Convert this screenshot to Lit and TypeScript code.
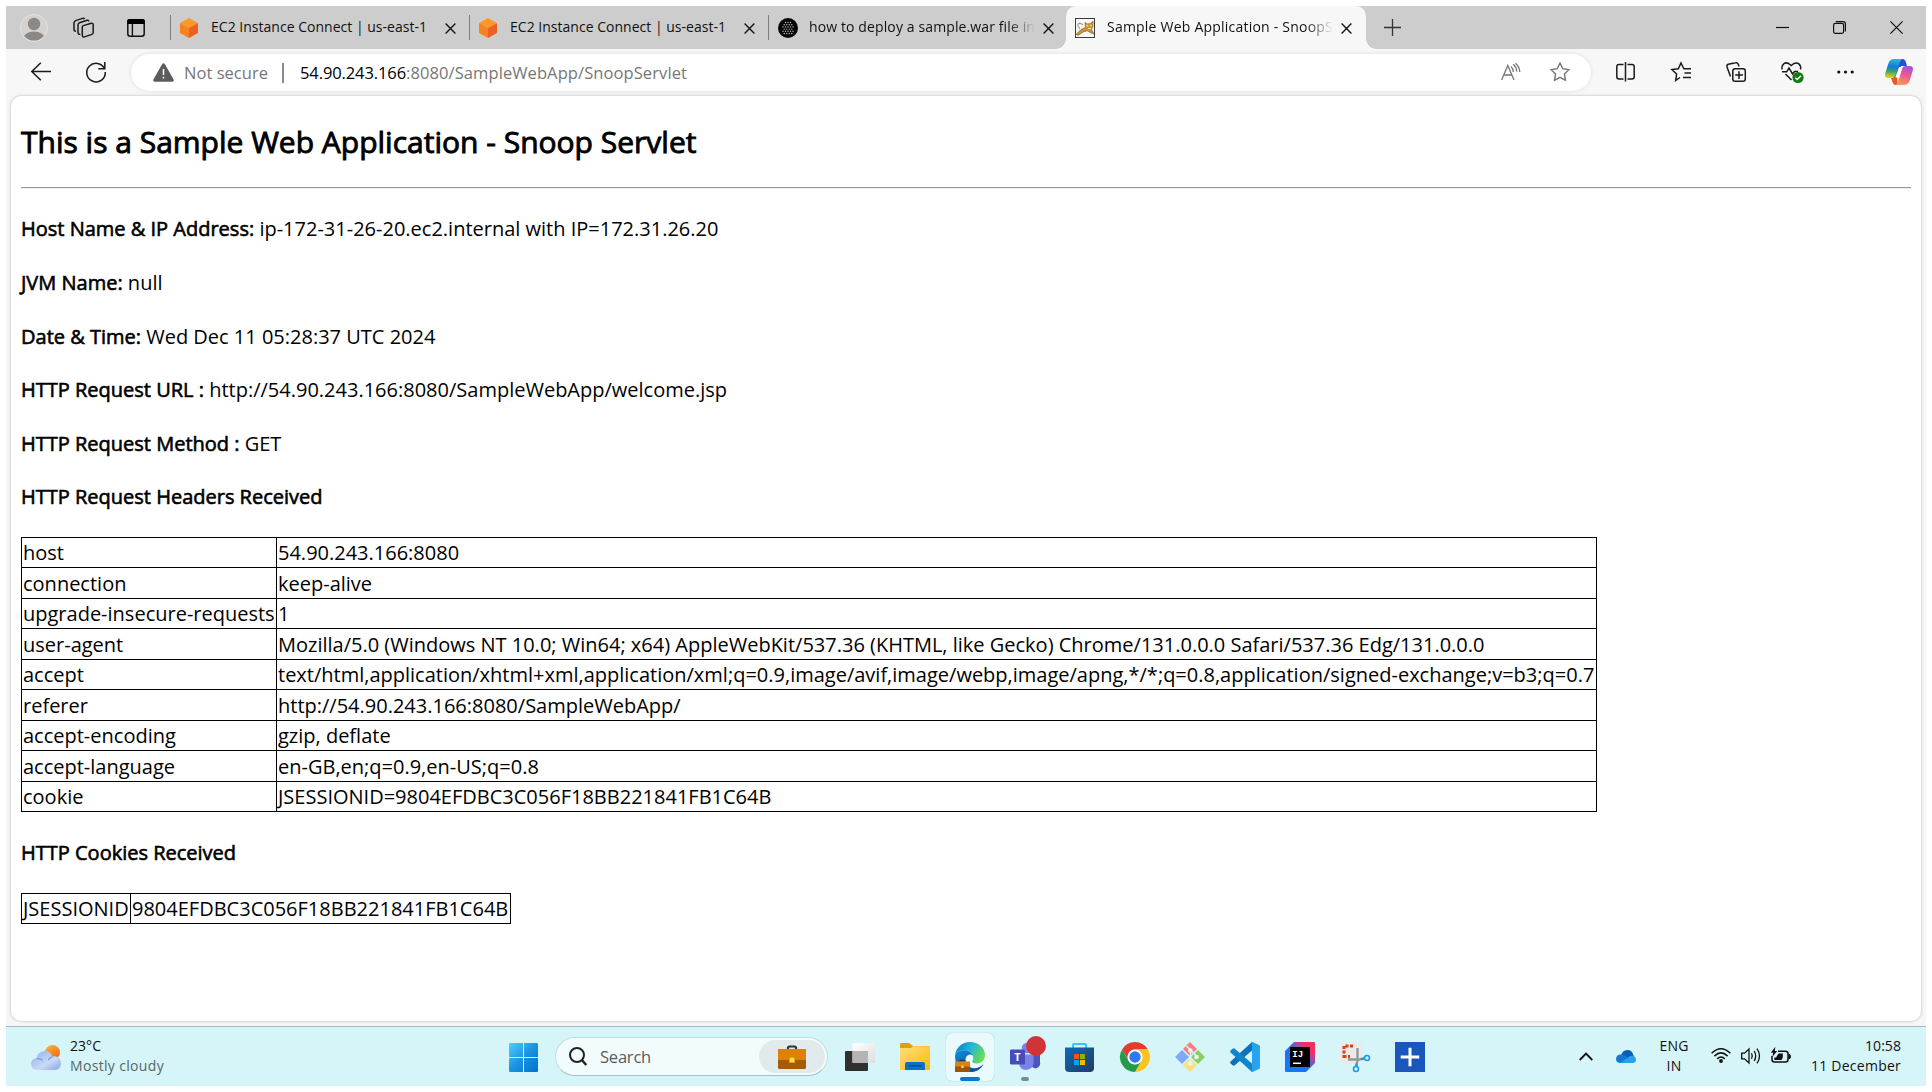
import { LitElement, html, svg, css, nothing } from "lit";
import { customElement, property } from "lit/decorators.js";

/** One line of text spread over an exact width by adjusting its tracking. */
@customElement("fit-text")
class FitText extends LitElement {
  @property({ type: Number }) width = 0;
  @property() text = "";
  static styles = css`
    :host { display: block; white-space: pre; }
    span { display: inline-block; }
  `;
  render() {
    return html`<span>${this.text}</span>`;
  }
  updated() {
    const s = this.renderRoot.querySelector("span") as HTMLElement;
    s.style.letterSpacing = "0px";
    const natural = s.getBoundingClientRect().width;
    s.style.letterSpacing = `${(this.width - natural) / this.text.length}px`;
  }
}

const fit = (text: string, width: number) => html`<fit-text .text=${text} .width=${width}></fit-text>`;

const icon = (cls: string, w: number, h: number, body: unknown) =>
  html`<svg class="ic ${cls}" width=${w} height=${h} viewBox="0 0 ${w} ${h}" fill="none">${body}</svg>`;

const closeX = html`<svg class="ic close" width="11" height="11" viewBox="0 0 11 11" fill="none">
  <path d="M.6.6l9.8 9.8M10.400.6L.6 10.400" stroke="#151515" stroke-width="1.400" /></svg>`;

const cube = icon("fav", 18, 20, svg`
  <path d="M9 0L18 5L9 10L0 5Z" fill="#fd9827"/>
  <path d="M0 5L9 10V20L0 15Z" fill="#f68220"/>
  <path d="M18 5L9 10V20L18 15Z" fill="#ec6122"/>`);

const dotsIcon = icon("fav", 20, 20, svg`
  <circle cx="10" cy="10" r="10" fill="#060606"/>
  ${[
    [4.5, 3], [6.7, 4], [8.9, 5], [11.1, 4], [13.3, 5], [15.5, 4],
  ].map(([y, n]) => Array.from({ length: n }, (_, i) =>
    svg`<circle cx=${10 + (i - (n - 1) / 2) * 2.5} cy=${y} r=".7" fill="#c4c4c4"/>`))}`);

const tomcat = icon("fav", 20, 20, svg`
  <rect x=".5" y=".5" width="19" height="19" fill="#f7f7f5" stroke="#3c3c3c"/>
  <path d="M8 7C5.500 4.500 2.500 5 2.800 7.500C3 9.500 5 9 4.500 11" stroke="#999" stroke-width="1.100"/>
  <path d="M1 16.500L6 11.500L10.500 9.500L10 4.500L12.500 6L15.500 5.500L18.200 3.200L17.800 8.500L16.500 11.500L19 16L15.800 14.800L12.500 12.800L8 14L3.500 17.200Z" fill="#cf9331" stroke="#6d5328" stroke-width=".6"/>
  <path d="M11.500 7.600h1.600M15 7.400h1.600" stroke="#f6e36a" stroke-width="1.500"/>
  <path d="M13 10.500h3" stroke="#f5e6c3" stroke-width="1.200"/>`);

const edgeIcon = svg`
  <defs>
    <linearGradient id="eg1" x1="0" y1=".2" x2="1" y2=".6"><stop offset="0" stop-color="#0c7bc9"/><stop offset=".45" stop-color="#22b4d9"/><stop offset="1" stop-color="#6be04c"/></linearGradient>
    <linearGradient id="eg2" x1="0" y1="0" x2=".7" y2="1"><stop offset="0" stop-color="#0f8bdc"/><stop offset="1" stop-color="#0b4f9c"/></linearGradient>
  </defs>
  <path d="M0 14C.5 6 7 0 15 0C23.500 0 30 6 30 13C30 18 26 21.500 21.500 21.500C18.500 21.500 16.800 20.300 17.200 19.200C18.500 17.500 18.300 16 18 14.800C17 11 12.500 8 8 8.300C4 8.500 1 10.500 0 14Z" fill="url(#eg1)"/>
  <path d="M0 14C1 10.500 4.300 8.300 8 8.300C12 8.200 16 10 17.600 13C14.500 11.200 10.500 13.500 10.500 18C10.500 23 15 27 20 26.500C23 26.200 25.500 25 28 22.500C25.500 27.500 20.500 30 15 30C6.500 30-.3 23 0 14Z" fill="url(#eg2)"/>
  <path d="M11 19C12 24 16 27 20.500 26.500C24 26.200 26.500 24.500 28.500 22C26 27.500 20.500 30 15 30L13 27Z" fill="#11509a"/>
  <path d="M5 19.500v-1.200h5v1.200" stroke="#3a2a18"/>
  <path d="M0 19.500h15V25H0z" fill="#d98512"/><path d="M0 24.500h15V30H0z" fill="#9b5608"/>
  <rect x="6.200" y="23.500" width="2.500" height="2.500" fill="#f6d34a"/>`;

const teams = svg`
  <circle cx="26" cy="7.500" r="4" fill="#5059c9"/>
  <path d="M21 13h9v7a4.500 4.500 0 0 1-9 3z" fill="#4c55bd"/>
  <circle cx="17" cy="6" r="5.300" fill="#7b83eb"/>
  <path d="M9.500 12.500h14V21a7.500 7.500 0 0 1-14 3z" fill="#7b83eb"/>
  <rect y="7.500" width="15" height="15" rx="1.200" fill="#454eb8"/>
  <text x="7.500" y="19" font-family="Open Sans, sans-serif" font-size="11" font-weight="700" text-anchor="middle" fill="#fff">T</text>`;

const store = svg`
  <defs><linearGradient id="st" x1="0" y1="0" x2="1" y2="1"><stop offset="0" stop-color="#0c6bb8"/><stop offset="1" stop-color="#233a63"/></linearGradient></defs>
  <path d="M8 6V2.800Q8 2 8.800 2H20.200Q21 2 21 2.800V6" stroke="#35c5f2" stroke-width="2"/>
  <path d="M0 5.500h29V26a4 4 0 0 1-4 4H4a4 4 0 0 1-4-4z" fill="url(#st)"/>
  <path d="M9 12h5v5H9z" fill="#f25022"/><path d="M15 12h5v5h-5z" fill="#7fba00"/>
  <path d="M9 18h5v5H9z" fill="#00a4ef"/><path d="M15 18h5v5h-5z" fill="#ffb900"/>`;

const chrome = svg`
  <circle cx="15" cy="15" r="15" fill="#fff"/>
  <path d="M2 7.500A15 15 0 0 1 28 7.500H15A7.500 7.500 0 0 0 8.500 18.700Z" fill="#e33b2e"/>
  <path d="M28 7.500A15 15 0 0 1 15 30L21.500 18.700A7.500 7.500 0 0 0 15 7.500Z" fill="#fcc31e"/>
  <path d="M2 7.500A15 15 0 0 0 15 30L21.500 18.700A7.500 7.500 0 0 1 8.500 18.700Z" fill="#249a4b"/>
  <circle cx="15" cy="15" r="7.300" fill="#fff"/><circle cx="15" cy="15" r="5.700" fill="#2f79ee"/>`;

const git = svg`
  <path d="M15 0L22 7L15 14L8 7Z" fill="#fb7c7f"/><path d="M7 8L14 15L7 22L0 15Z" fill="#7da9fb"/>
  <path d="M23 8L30 15L23 22L16 15Z" fill="#87d05d"/><path d="M15 16L22 23L15 30L8 23Z" fill="#fbe07c"/>
  <path d="M11.500 4L15.500 8V22M15.500 8L22 14.500" stroke="#d9f3f5" stroke-width="1.600"/>
  <circle cx="15.300" cy="8.500" r="2.300" fill="#e4f5f6"/><circle cx="15.300" cy="21.500" r="2.300" fill="#e4f5f6"/><circle cx="21.500" cy="15" r="2.300" fill="#e4f5f6"/>`;

const vscode = svg`
  <path d="M22 0L22 8.500L4.500 23.500Q3.700 24 3 23.500L.6 21.400Q-.2 20.500.6 19.600Z" fill="#0d72b8"/>
  <path d="M22 30V21.500L4.500 6.500Q3.700 6 3 6.500L.6 8.600Q-.2 9.500.6 10.400Z" fill="#0f86cc"/>
  <path d="M21 .2Q22 -.3 23 .2L29 3Q30 3.500 30 4.600V25.400Q30 26.500 29 27L23 29.800Q22 30.300 21 29.500Q22 29 22 27.500V2.500Q22 1 21 .2Z" fill="#28a4ee"/>`;

const intellij = svg`
  <defs>
    <linearGradient id="ij" x1="0" y1="1" x2="1" y2="0"><stop offset="0" stop-color="#0a7dff"/><stop offset=".5" stop-color="#2170f0"/><stop offset=".66" stop-color="#a04ca8"/><stop offset=".8" stop-color="#fb2b5e"/><stop offset="1" stop-color="#f52e68"/></linearGradient>
  </defs>
  <path d="M9 0H29a1 1 0 0 1 1 1V21L21 30H1a1 1 0 0 1-1-1V9Z" fill="url(#ij)"/>
  <path d="M5 5H25V25H5Z" fill="#000"/>
  <text x="7.300" y="14.700" font-family="Liberation Mono, monospace" font-size="9" font-weight="700" fill="#fff">IJ</text>
  <path d="M8 21.300h8" stroke="#fff" stroke-width="1.500"/>`;

const snip = svg`
  <rect width="22" height="22" rx="3.500" fill="#ece9e9"/>
  <path d="M4 16V4H14.500" stroke="#d4420f" stroke-width="3" stroke-dasharray="3 1.500"/>
  <path d="M4 14.500h6" stroke="#d4420f" stroke-width="3" stroke-dasharray="2.500 1.500"/>
  <path d="M17.500 6V19L15.800 24M8 17.500H19L24 16.200" stroke="#8f979c" stroke-width="2.300"/>
  <circle cx="27" cy="16" r="2.500" stroke="#1c9ae0" stroke-width="1.600"/><circle cx="16" cy="27" r="2.500" stroke="#1c9ae0" stroke-width="1.600"/>
  <path d="M21 17.200l3.500-.7M17 21.500l-.7 3" stroke="#1c9ae0" stroke-width="2"/>`;

const plusApp = svg`
  <rect width="30" height="30" fill="#1a57bd"/><path d="M15 5.700V24.300M5.700 15H24.300" stroke="#fff" stroke-width="3"/>`;

const APPS: { art: unknown; mark?: string; dot?: boolean }[] = [
  { art: edgeIcon, mark: "active" },
  { art: teams, mark: "open", dot: true },
  { art: store }, { art: chrome }, { art: git }, { art: vscode },
  { art: intellij }, { art: snip }, { art: plusApp },
];

const TABS = [
  { icon: cube, title: "EC2 Instance Connect | us-east-1", w: 216 },
  { icon: cube, title: "EC2 Instance Connect | us-east-1", w: 216 },
  { icon: dotsIcon, title: "how to deploy a sample.war file in", w: 226 },
  { icon: tomcat, title: "Sample Web Application - SnoopS", w: 226, active: true },
];

const FACTS = [
  ["Host Name & IP Address:", "ip-172-31-26-20.ec2.internal with IP=172.31.26.20"],
  ["JVM Name:", "null"],
  ["Date & Time:", "Wed Dec 11 05:28:37 UTC 2024"],
  ["HTTP Request URL :", "http://54.90.243.166:8080/SampleWebApp/welcome.jsp"],
  ["HTTP Request Method :", "GET"],
  ["HTTP Request Headers Received", ""],
];

const HEADERS = [
  ["host", "54.90.243.166:8080"],
  ["connection", "keep-alive"],
  ["upgrade-insecure-requests", "1"],
  ["user-agent", "Mozilla/5.0 (Windows NT 10.0; Win64; x64) AppleWebKit/537.36 (KHTML, like Gecko) Chrome/131.0.0.0 Safari/537.36 Edg/131.0.0.0"],
  ["accept", "text/html,application/xhtml+xml,application/xml;q=0.9,image/avif,image/webp,image/apng,*/*;q=0.8,application/signed-exchange;v=b3;q=0.7"],
  ["referer", "http://54.90.243.166:8080/SampleWebApp/"],
  ["accept-encoding", "gzip, deflate"],
  ["accept-language", "en-GB,en;q=0.9,en-US;q=0.8"],
  ["cookie", "JSESSIONID=9804EFDBC3C056F18BB221841FB1C64B"],
];

@customElement("tab-strip")
class TabStrip extends LitElement {
  static styles = css`
    :host { display: flex; height: 43px; background: #cdcdcd; align-items: center; font-size: 14px; color: #111; }
    .ic { display: block; flex: none; overflow: visible; }
    .avatar { margin-left: 14px; }
    .spaces { margin-left: 25px; }
    .vtabs { margin-left: 33px; }
    .tabs { display: flex; height: 43px; margin-left: 25px; }
    .tab { display: flex; align-items: center; width: 299px; box-sizing: border-box; height: 43px; }
    .tab:nth-child(4) { width: 300px; }
    .bar { width: 1px; height: 25px; background: #7d7d7d; flex: none; margin-right: 9px; }
    .pic { width: 20px; flex: none; display: flex; align-items: center; margin-top: 1px; }
    .title { width: 226px; margin-left: 11px; flex: none; overflow: hidden; line-height: 22px; margin-top: -1px; }
    .fade { -webkit-mask-image: linear-gradient(90deg, #000 88%, transparent 100%); }
    .close { margin: 1px 0 0 8px; }
    .active { background: #f7f7f7; border-radius: 10px 10px 0 0; position: relative; padding-left: 9px; margin-left: -1px; }
    .active .title { margin-left: 12px; }
    .active::before, .active::after { content: ""; position: absolute; bottom: 0; width: 10px; height: 10px; }
    .active::before { left: -10px; background: radial-gradient(circle at 0 0, transparent 9.500px, #f7f7f7 10px); }
    .active::after { right: -10px; background: radial-gradient(circle at 100% 0, transparent 9.500px, #f7f7f7 10px); }
    .plus { margin-left: 18px; }
    .win { display: flex; margin-left: auto; margin-right: 23px; gap: 44px; align-items: center; }
  `;
  render() {
    return html`
      ${icon("avatar", 28, 28, svg`
        <defs><clipPath id="av"><circle cx="14" cy="14" r="12.600"/></clipPath></defs>
        <circle cx="14" cy="14" r="13.500" fill="#d4d2cf" stroke="#e4e3df"/>
        <g clip-path="url(#av)"><circle cx="14" cy="10" r="6.200" fill="#8b8886"/><ellipse cx="14" cy="24" rx="10.500" ry="6.500" fill="#8b8886"/></g>`)}
      ${icon("spaces", 21, 20, svg`<g stroke="#1a1a1a" stroke-width="1.500">
        <path d="M10.400 7.600L18.300 5.300Q20.200 5 20.200 6.800V14.600Q20.200 16 18.900 16.400L11.400 18.900Q9.300 19.400 9.300 17.300V9.200Q9.300 8 10.400 7.600Z"/>
        <path d="M7.300 16.200Q5 16.500 5 14.300V7Q5 5.300 6.500 4.700L14 2.300Q15.700 2 15.900 3.500"/>
        <path d="M3 13.300Q1 13.300 1 11.300V5Q1 3.200 2.600 2.600L9.500.4Q11 0 11.500 1.100"/></g>`)}
      ${icon("vtabs", 18, 18, svg`<rect x=".8" y=".8" width="16.400" height="16.400" rx="2.500" stroke="#111" stroke-width="1.500"/>
        <path d="M0 5V2.500Q0 0 2.500 0h13Q18 0 18 2.500V5Z" fill="#000"/><path d="M5.400 5V17" stroke="#111" stroke-width="1.400"/>`)}
      <div class="tabs">
        ${TABS.map((t) => html`<div class="tab ${t.active ? "active" : ""}">
          ${t.active ? nothing : html`<span class="bar"></span>`}
          <span class="pic">${t.icon}</span>
          <div class="title ${t.w > 220 ? "fade" : ""}">${fit(t.title, t.w)}</div>
          ${closeX}
        </div>`)}
      </div>
      ${icon("plus", 17, 17, svg`<path d="M8.500 0V17M0 8.500H17" stroke="#333" stroke-width="1.300"/>`)}
      <div class="win">
        ${icon("", 13, 13, svg`<path d="M0 6.500H13" stroke="#111" stroke-width="1.200"/>`)}
        ${icon("", 13, 13, svg`<rect x=".6" y="2.400" width="10" height="10" rx="1.800" stroke="#111" stroke-width="1.200"/><path d="M2.800.6H10Q12.400.6 12.400 3V10.500" stroke="#111" stroke-width="1.200"/>`)}
        ${icon("", 13, 13, svg`<path d="M.4.4L12.600 12.600M12.600.4L.4 12.600" stroke="#111" stroke-width="1.200"/>`)}
      </div>`;
  }
}

const STAR = "M10 .9L12.700 6.700L19.100 7.600L14.400 12L15.600 18.400L10 15.300L4.400 18.400L5.600 12L.9 7.600L7.300 6.700Z";

@customElement("tool-bar")
class ToolBar extends LitElement {
  static styles = css`
    :host { display: flex; height: 47px; background: #f7f7f7; align-items: center; font-size: 16.500px; color: #767676; }
    .ic { display: block; flex: none; overflow: visible; margin-bottom: 1px; }
    .back { margin-left: 25px; margin-right: 35px; }
    .reload { margin-right: 25px; }
    .field { display: flex; align-items: center; width: 1460px; height: 37px; border-radius: 19px; background: #fff; box-shadow: 0 0 4px #0000001c; flex: none; box-sizing: border-box; padding-left: 22px; }
    .ns { width: 83px; margin-left: 10px; }
    .bar { width: 2px; height: 20px; background: #8a8a8a; margin: 0 16px 0 15px; }
    .host { color: #000; }
    .read { margin-left: auto; margin-right: 30px; }
    .star { margin-right: 21px; }
    .actions { display: flex; align-items: center; margin-left: 25px; gap: 35px; }
    .split { margin-right: 1px; }
    .heart { margin-right: -2px; }
    .more { margin-right: -4px; }
  `;
  render() {
    return html`
      ${icon("back", 20, 20, svg`<path d="M20 9.500H.8M9.800.8L.8 9.500L9.800 18.200" stroke="#1b1b1b" stroke-width="1.500"/>`)}
      ${icon("reload", 20, 20, svg`<path d="M18.600 7A9.300 9.300 0 1 0 19.300 10" stroke="#1b1b1b" stroke-width="1.500"/><path d="M18.800 0V6.700H12.300" stroke="#1b1b1b" stroke-width="1.500"/>`)}
      <div class="field">
        ${icon("", 21, 19, svg`<path d="M10.500 1.800L19.300 17.300H1.700Z" fill="#5c5c5c" stroke="#5c5c5c" stroke-width="3" stroke-linejoin="round"/><path d="M10.500 6V12M10.500 13.700V15.500" stroke="#fff" stroke-width="1.500"/>`)}
        <span class="ns">${fit("Not secure", 84)}</span>
        <span class="bar"></span>
        <span class="host">${fit("54.90.243.166", 106)}</span>
        <span>${fit(":8080/SampleWebApp/SnoopServlet", 281)}</span>
        ${icon("read", 19, 18, svg`<g stroke="#777" stroke-width="1.300"><path d="M.6 17L6.800 2.500L13 17M3 12H10.700"/><path d="M10 3.500Q12.300 5.500 12.300 9M12.300 1.300Q15.500 4 15.800 8.500M14.500 .2Q18.500 3.500 18.800 9"/></g>`)}
        ${icon("star", 20, 20, svg`<path d=${STAR} stroke="#777" stroke-width="1.400" stroke-linejoin="round"/>`)}
      </div>
      <div class="actions">
        ${icon("split", 19, 20, svg`<path d="M7.500 2.500H3Q.8 2.500.8 4.700V14.800Q.8 17 3 17H7.500M11.500 2.500H16Q18.200 2.500 18.200 4.700V14.800Q18.200 17 16 17H11.500M9.500 0V19.500" stroke="#1b1b1b" stroke-width="1.500"/>`)}
        ${icon("", 20, 20, svg`<path d="M13 7L10 .9L7.300 6.700L.9 7.600L5.600 12L4.700 18.400L9 15.500M12.500 6.700H20M13.500 11H20M12 15.500H20" stroke="#1b1b1b" stroke-width="1.500"/>`)}
        ${icon("", 20, 20, svg`<g stroke="#1b1b1b" stroke-width="1.500"><rect x="6.800" y="6.800" width="12.500" height="12.500" rx="2.300"/><path d="M13 9.300V17M9.200 13H17M4.500 14.500L1 5Q.4 3 2.300 2.300L9.500.8Q11.500.3 12.300 2.300L13 4.500"/></g>`)}
        ${icon("heart", 23, 20, svg`<g stroke="#1b1b1b" stroke-width="1.500"><path d="M1.200 7.500C0 3 4-.5 7.500 1.500L10.200 3.500L13 1.500C17 -.3 20.500 3 19.500 7.500M1 9.800H5.700L8 6L11.500 12L13.500 9.500H17M4.500 12L10.500 18"/></g>
          <circle cx="17" cy="15.500" r="5.600" fill="#107c10"/><path d="M14.300 15.700L16.200 17.500L20 13.700" stroke="#fff" stroke-width="1.400"/>`)}
        ${icon("more", 17, 4, svg`<circle cx="1.800" cy="2" r="1.600" fill="#111"/><circle cx="8.500" cy="2" r="1.600" fill="#111"/><circle cx="15.200" cy="2" r="1.600" fill="#111"/>`)}
        ${icon("", 28, 26, svg`<defs>
            <linearGradient id="c1" x1=".4" y1="0" x2=".3" y2="1"><stop offset="0" stop-color="#2cb3ee"/><stop offset=".4" stop-color="#1479d4"/><stop offset=".65" stop-color="#38a46c"/><stop offset="1" stop-color="#f1d60e"/></linearGradient>
            <linearGradient id="c2" x1=".7" y1="0" x2=".4" y2="1"><stop offset="0" stop-color="#a54fe4"/><stop offset=".5" stop-color="#ee5a8c"/><stop offset="1" stop-color="#fb9a55"/></linearGradient></defs>
          <path d="M14 0H17.500Q20 0 20.800 3L22 7H16L12 19H8Z" fill="#2350d4"/>
          <path d="M9 0H17.500Q15.800.3 15 3L10.500 16.500Q9.800 19 7 19H3Q-.8 19 .2 14.500L3.500 4Q5 0 9 0Z" fill="url(#c1)"/>
          <path d="M6 19H10Q11 17 12 13L12.500 26H10Q8.500 26 7.500 23Z" fill="#ec5432"/>
          <path d="M19 26H10.500Q12.300 25.700 13 23L17 9.500Q17.800 7 20.500 7H24.800Q28.800 7 27.800 11.500L24.500 22Q23 26 19 26Z" fill="url(#c2)"/>
          <path d="M14 8H17.300L14.300 18.500H10.300Z" fill="#fff"/>`)}
      </div>`;
  }
}

@customElement("snoop-page")
class SnoopPage extends LitElement {
  static styles = css`
    :host { display: block; box-sizing: border-box; height: 925px; margin: 0 5px; padding: 25px 10px 0; background: #fff; border-radius: 10px; box-shadow: 0 0 3px #00000045; font-size: 20px; line-height: 27px; color: #000; overflow: hidden; }
    .h2 { margin: 0; font-size: 30px; line-height: 41px; font-weight: 400; -webkit-text-stroke: 0.900px #000; }
    .rule { height: 1px; background: #9a9a9a; border-bottom: 1px solid #ececec; margin: 25px 0 26.400px; }
    .fact { height: 27px; margin-bottom: 26.600px; white-space: pre; }
    .label { -webkit-text-stroke: 0.600px #000; }
    .grid { display: grid; border: 1px solid #000; box-sizing: border-box; white-space: pre; }
    .cell { padding: 1px 0 0 1px; border-bottom: 1px solid #000; box-sizing: border-box; }
    .cell:nth-child(4n), .cell:nth-child(4n + 3) { padding-top: 2px; }
    .cell:nth-child(odd) { border-right: 1px solid #000; }
    .cell:nth-last-child(-n + 2) { border-bottom: 0; }
    .headers { width: 1576px; height: 275px; grid-template-columns: 255px 1fr; grid-template-rows: repeat(4, 30px 31px) 29px; }
    .cookies { width: 490px; height: 31px; grid-template-columns: 109px 1fr; grid-template-rows: 29px; }
    .second { margin: 27px 0; }
  `;
  private grid(cls: string, rows: string[][]) {
    return html`<div class="grid ${cls}">
      ${rows.map(([k, v]) => html`<div class="cell">${k}</div><div class="cell">${v}</div>`)}
    </div>`;
  }
  render() {
    return html`
      <h2 class="h2">This is a Sample Web Application - Snoop Servlet</h2>
      <div class="rule"></div>
      ${FACTS.map(([k, v]) => html`<div class="fact"><span class="label">${k}</span> ${v}</div>`)}
      ${this.grid("headers", HEADERS)}
      <div class="fact second"><span class="label">HTTP Cookies Received</span></div>
      ${this.grid("cookies", [["JSESSIONID", "9804EFDBC3C056F18BB221841FB1C64B"]])}`;
  }
}

@customElement("task-bar")
class TaskBar extends LitElement {
  static styles = css`
    :host { display: flex; box-sizing: border-box; height: 60px; border-top: 1px solid #9fbcbf; background: #d6f5f9; align-items: center; font-size: 14px; color: #111; line-height: 20px; }
    .ic { display: block; flex: none; overflow: visible; }
    .weather { margin-left: 25px; margin-right: 9px; margin-top: 1px; }
    .two { display: flex; flex-direction: column; margin-bottom: 2px; }
    .wt { width: 94px; }
    .dim { color: #56666a; }
    .start { margin-left: 345px; margin-top: 1px; }
    .search { display: flex; align-items: center; box-sizing: border-box; width: 273px; height: 39px; margin-left: 17px; border: 1px solid #c3dcdf; border-bottom-color: #a5c1c4; border-radius: 20px; background: #f3fcfd; padding-left: 13px; font-size: 16.500px; color: #565c5e; flex: none; }
    .word { margin-left: 13px; }
    .case { display: flex; align-items: center; justify-content: center; width: 66px; height: 33px; border-radius: 17px; background: #e2ebeb; margin-left: auto; margin-right: 2px; }
    .views { margin-left: 17px; }
    .folder { margin-left: 25px; }
    .apps { display: flex; gap: 7px; margin-left: 16px; }
    .app { position: relative; width: 48px; height: 48px; display: flex; align-items: center; justify-content: center; border-radius: 6px; }
    .app.active { background: #e9f9fc; box-shadow: 0 0 1px #8aa8ac; }
    .app.active::after, .app.open::after { content: ""; position: absolute; bottom: 0; height: 4px; border-radius: 2px; left: 50%; transform: translateX(-50%); }
    .app.active::after { width: 20px; background: #0078d4; }
    .app.open::after { width: 8px; background: #7b8c8f; }
    .badge { position: absolute; width: 20px; height: 20px; border-radius: 50%; background: #d13438; left: 25px; top: 3px; }
    .tray { display: flex; align-items: center; margin-left: auto; padding-right: 25px; }
    .cloud { margin-left: 23px; margin-bottom: 1px; }
    .lang { align-items: center; width: 30px; margin: 0 22px 2px 23px; }
    .status { display: flex; gap: 10px; width: 80px; align-items: center; margin-bottom: 2px; }
    .clock { align-items: flex-end; width: 90px; margin-left: 20px; }
  `;
  render() {
    return html`
      ${icon("weather", 30, 25, svg`<defs>
          <linearGradient id="sun" x1="0" y1="0" x2=".6" y2="1"><stop offset="0" stop-color="#f6b93a"/><stop offset="1" stop-color="#f06a14"/></linearGradient>
          <linearGradient id="cl" x1="0" y1="0" x2="1" y2="1"><stop offset="0" stop-color="#8fb0ec"/><stop offset=".6" stop-color="#c9d9f6"/><stop offset="1" stop-color="#82a4e6"/></linearGradient></defs>
        <circle cx="21.500" cy="7.500" r="7.500" fill="url(#sun)"/>
        <path d="M6 25A6 6 0 0 1 0 19C0 15.500 2.500 13.500 5.500 13.300C6.500 9 9.500 6 14 6C18 6 20.500 8.500 21.500 11.500C26.500 10.500 30 13.500 30 18C30 22 27.500 25 24 25Z" fill="url(#cl)"/>
        <path d="M5.500 13.500Q9.500 13.500 11.500 15.500M21.500 11.700Q18.500 12.500 17.500 15" stroke="#7397df" stroke-width="1.200"/>`)}
      <div class="two wt">${fit("23°C", 31)}<span class="dim">${fit("Mostly cloudy", 94)}</span></div>
      ${icon("start", 29, 29, svg`<defs><linearGradient id="ws" x1="0" y1="0" x2="1" y2="1"><stop offset="0" stop-color="#4cd0fc"/><stop offset=".5" stop-color="#1a93e0"/><stop offset="1" stop-color="#0070d0"/></linearGradient></defs>
        <path d="M1 0H14V14H0V1Q0 0 1 0ZM15 0H28Q29 0 29 1V14H15ZM0 15H14V29H1Q0 29 0 28ZM15 15H29V28Q29 29 28 29H15Z" fill="url(#ws)"/>`)}
      <div class="search">
        ${icon("", 18, 19, svg`<circle cx="8" cy="8" r="7" stroke="#222" stroke-width="2"/><path d="M12.800 13L17.300 18" stroke="#222" stroke-width="2.400"/>`)}
        <span class="word">${fit("Search", 51)}</span>
        <span class="case">${icon("", 28, 24, svg`<path d="M10 5V3Q10 1.500 11.500 1.500H16.500Q18 1.500 18 3V5" stroke="#333" stroke-width="2.200"/>
          <rect y="4" width="28" height="20" rx="1.500" fill="#a65a08"/><path d="M0 15V5.500Q0 4 1.500 4H26.500Q28 4 28 5.500V15Z" fill="#dd8109"/><rect x="11.500" y="12.500" width="5" height="5" fill="#ffe04a" stroke="#d9a400"/>`)}</span>
      </div>
      ${icon("views", 30, 28, svg`<defs><linearGradient id="tv" x1="0" y1="0" x2="1" y2="1"><stop offset="0" stop-color="#fff"/><stop offset="1" stop-color="#dedede"/></linearGradient></defs>
        <rect y="8" width="23" height="20" rx="1" fill="#303030"/><rect x="7.500" width="22.500" height="20" rx="1" fill="url(#tv)"/><path d="M7.500 8H23V20H7.500Z" fill="#b4b4b4"/>`)}
      ${icon("folder", 30, 27, svg`<defs><linearGradient id="fo" x1="0" y1="0" x2="1" y2="1"><stop offset="0" stop-color="#ffdf79"/><stop offset="1" stop-color="#fcb90f"/></linearGradient></defs>
        <path d="M0 8V1Q0 0 1 0H9L13 3H29Q30 3 30 4V8Z" fill="#dda008"/><path d="M0 5H11L13 3.300H30V26Q30 27 29 27H1Q0 27 0 26Z" fill="url(#fo)"/>
        <path d="M5 27V21Q5 19 7 19H23Q25 19 25 21V27Z" fill="#0c70c4"/><path d="M8.500 22.800H21.500" stroke="#07478a" stroke-width="1.300"/>`)}
      <div class="apps">
        ${APPS.map((a) => html`<div class="app ${a.mark ?? ""}">${icon("", 30, 30, a.art)}${a.dot ? html`<span class="badge"></span>` : nothing}</div>`)}
      </div>
      <div class="tray">
        ${icon("", 14, 9, svg`<path d="M.7 8L7 1.500L13.300 8" stroke="#111" stroke-width="1.800"/>`)}
        ${icon("cloud", 20, 13, svg`<path d="M5 6Q6 0 11.500 0Q16 0 17.300 5L19 8L10 10L3 9Z" fill="#0861b8"/><path d="M4 13Q0 12.500 0 8.800Q.5 4.500 5 4.500Q8 4.300 10 6.500L15 10L12 13Z" fill="#1279d2"/><path d="M4.500 13L12 7.500Q14 5 17 6Q20 7 20 9.700Q19.800 13 16.500 13Z" fill="#28a2ea"/>`)}
        <div class="two lang">${fit("ENG", 29)}${fit("IN", 15)}</div>
        <div class="status">
          ${icon("", 20, 15, svg`<g stroke="#111" stroke-width="1.500"><path d="M.6 5.300Q10-3.700 19.400 5.300M3.400 8.100Q10 1.700 16.600 8.100M6.200 10.900Q10 7.200 13.800 10.900"/></g><circle cx="10" cy="13" r="1.900" fill="#111"/>`)}
          ${icon("", 20, 16, svg`<g stroke="#111" stroke-width="1.300"><path d="M.7 5.200H3.500L8 1V15L3.500 10.800H.7Z"/><path d="M10.500 5.300Q12 8 10.500 10.700M13.200 3Q16.200 8 13.200 13M16 .6Q21 8 16 15.400"/></g>`)}
          ${icon("", 20, 16, svg`<path d="M7 3.200H14.500Q17 3.200 17 5.700V11.500Q17 14 14.500 14H3.500Q1 14 1 11.500V8" stroke="#111" stroke-width="1.500"/><path d="M3.300 12V9.500H5L7.500 5.500H11.800V9.500L10.500 12Z" fill="#111"/><path d="M17.500 6H18.800Q20 7 20 8.500T18.800 11H17.500Z" fill="#111"/><path d="M4.300-1.200L-.2 4.700H2.200L1.300 9L6.200 3H3.800Z" fill="#111"/>`)}
        </div>
        <div class="two clock">${fit("10:58", 36)}${fit("11 December", 90)}</div>
      </div>`;
  }
}

@customElement("app-root")
class AppRoot extends LitElement {
  static styles = css`
    :host { display: block; box-sizing: border-box; width: 1932px; height: 1092px; padding: 6px; background: #fff; font-family: "Open Sans", "Noto Sans", sans-serif; overflow: hidden; }
    .window { height: 1020px; background: #f6f6f6; }
  `;
  render() {
    return html`
      <div class="window"><tab-strip></tab-strip><tool-bar></tool-bar><snoop-page></snoop-page></div>
      <task-bar></task-bar>`;
  }
}
